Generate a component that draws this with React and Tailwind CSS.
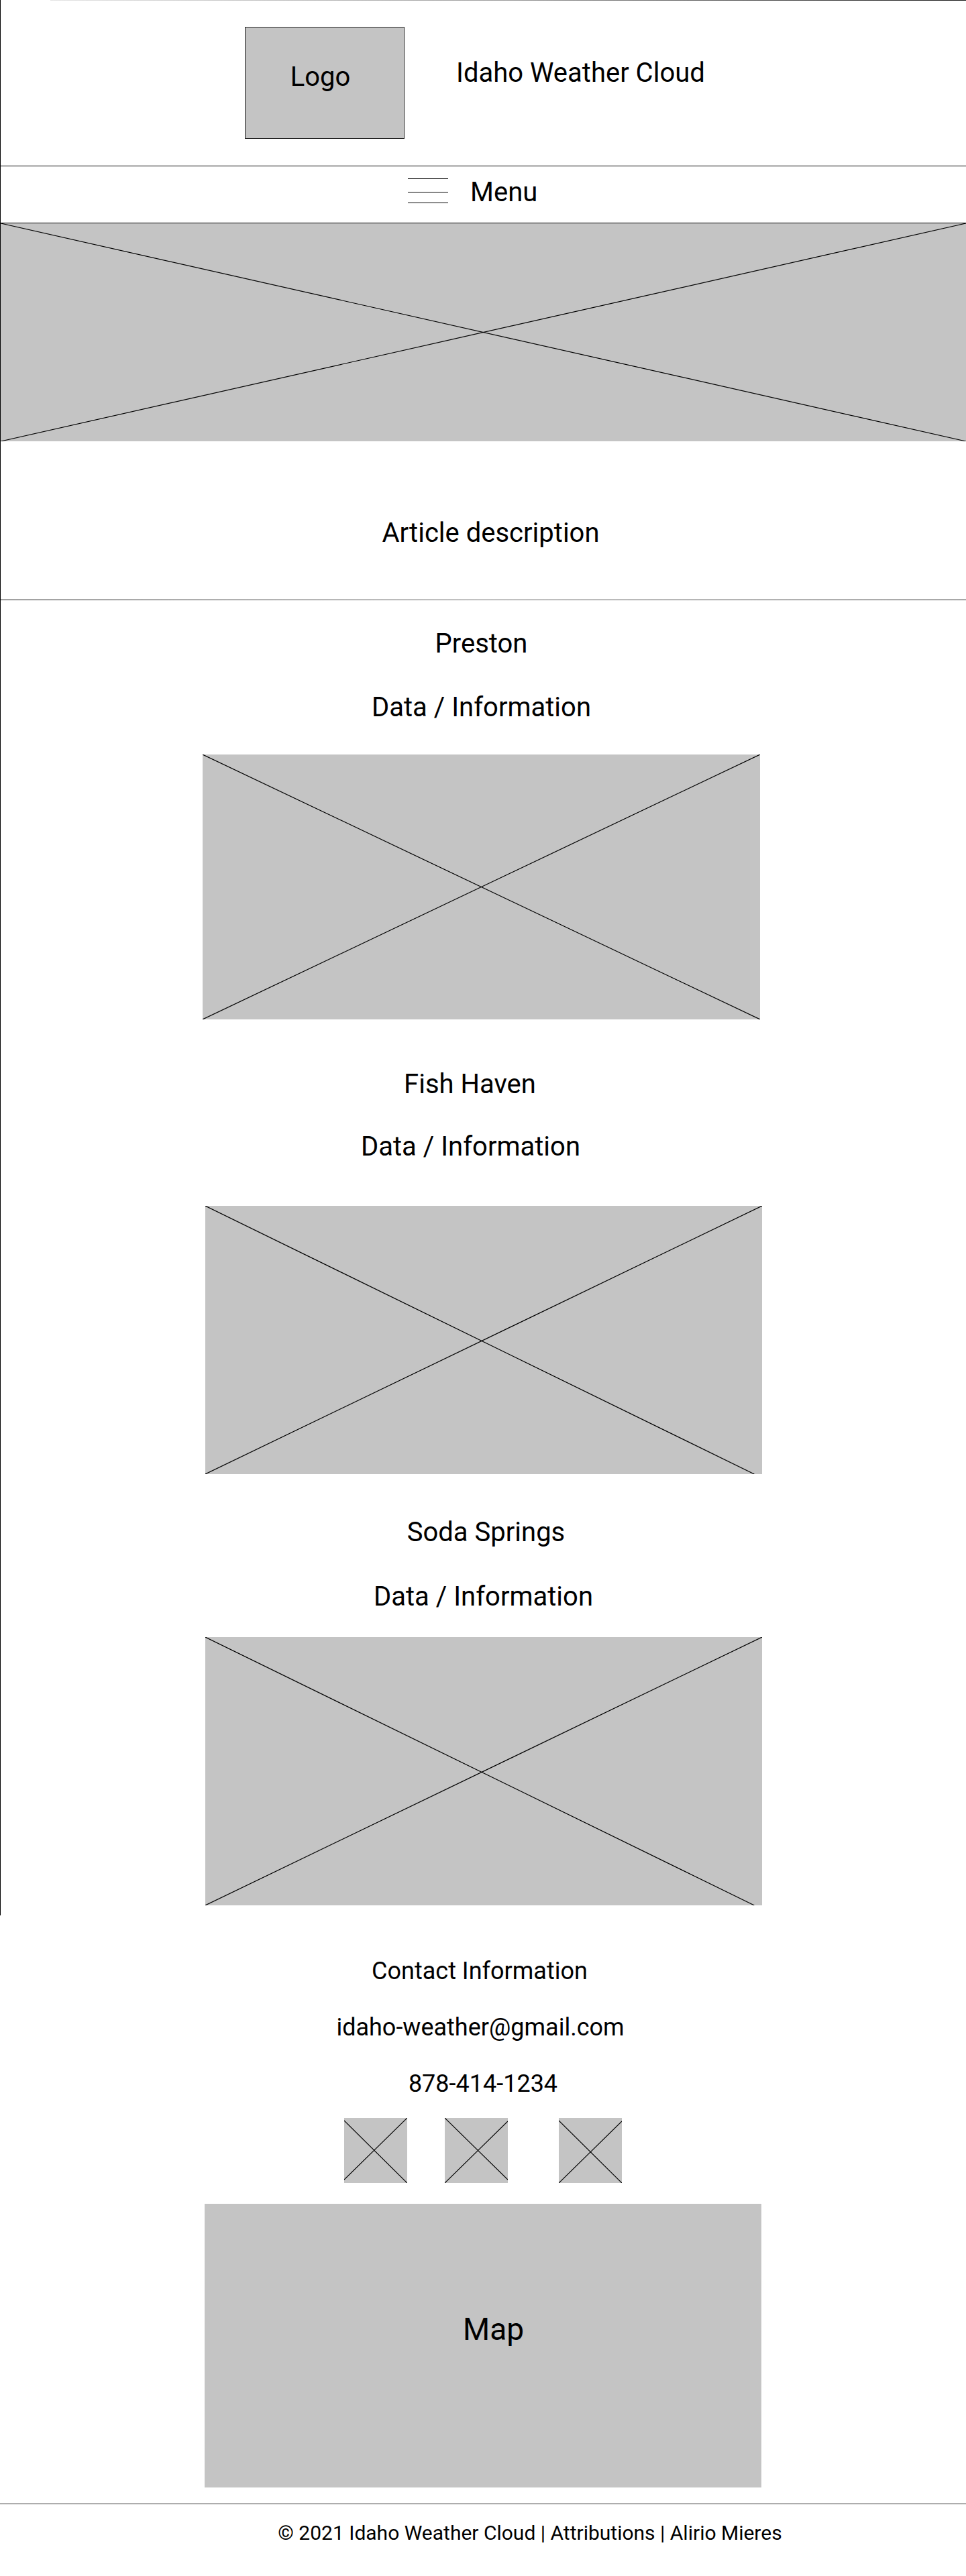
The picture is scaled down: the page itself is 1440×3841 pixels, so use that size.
const Placeholder = ({ className, lines }) => (
  <div className={"bg-[#c4c4c4] " + className}>
    <svg className="block w-full h-full" viewBox="0 0 100 100" preserveAspectRatio="none">
      {lines.map((l, i) => (
        <line
          key={i}
          x1={l[0]}
          y1={l[1]}
          x2={l[2]}
          y2={l[3]}
          stroke="#000"
          strokeWidth="1.2"
          vectorEffect="non-scaling-stroke"
        />
      ))}
    </svg>
  </div>
);

const cross = [
  [0, 0, 100, 100],
  [0, 100, 100, 0],
];

const cities = [
  {
    name: "Preston",
    nameCls: "mt-[45px] pr-[6px]",
    dataCls: "mt-[55px] pr-[6px]",
    imgCls: "mt-[50px] ml-[301px] w-[831px] h-[395px]",
    lines: cross,
  },
  {
    name: "Fish Haven",
    nameCls: "mt-[77px] pr-[40px]",
    dataCls: "mt-[53px] pr-[38px]",
    imgCls: "mt-[68px] ml-[305px] w-[830px] h-[400px]",
    lines: [
      [0, 0, 98.6, 100],
      [0, 100, 100, 0],
    ],
  },
  {
    name: "Soda Springs",
    nameCls: "mt-[67px] pl-[8px]",
    dataCls: "mt-[56px]",
    imgCls: "mt-[40px] ml-[305px] w-[830px] h-[400px]",
    lines: [
      [0, 0, 98.6, 100],
      [0, 100, 100, 0],
    ],
  },
];

const icons = [
  { cls: "", lines: [[0, 4, 100, 100], [0, 95, 100, 0]] },
  { cls: "ml-[56px]", lines: [[0, 0, 100, 95], [0, 100, 100, 5]] },
  { cls: "ml-[76px]", lines: [[0, 4, 100, 100], [0, 100, 100, 5]] },
];

const App = () => {
  return (
    <div className="w-full bg-white text-black font-[Roboto,sans-serif]">
      <div className="border-l border-black pb-[15px]">
        <div className="h-px ml-[74px] bg-gradient-to-r from-[#e4e4e4] via-[#9a9a9a] to-[#1a1a1a]" />

        <header className="h-[246px] flex items-start pt-[39px] pl-[364px]">
          <div className="w-[238px] h-[167px] border border-[#222] bg-[#c4c4c4] flex flex-col items-center pt-[54px] pr-[13px]">
            <span className="text-[40px] leading-none">Logo</span>
          </div>
          <h1 className="ml-[77px] mt-[49px] text-[40px] leading-none font-normal">
            Idaho Weather Cloud
          </h1>
        </header>

        <nav className="h-[86px] border-y border-black flex items-start pl-[607px]">
          <svg className="mt-[18px] w-[60px] h-[37px]" viewBox="0 0 60 37">
            <line x1="0" y1="0.5" x2="60" y2="0.5" stroke="#000" strokeWidth="1" />
            <line x1="0" y1="20.5" x2="60" y2="20.5" stroke="#000" strokeWidth="1" />
            <line x1="0" y1="36.5" x2="60" y2="36.5" stroke="#000" strokeWidth="1" />
          </svg>
          <span className="ml-[33px] mt-[19px] text-[40px] leading-none">Menu</span>
        </nav>

        <Placeholder className="w-full h-[325px]" lines={cross} />

        <section className="h-[236px] pt-[117px] pl-[22px] text-center">
          <p className="text-[40px] leading-none">Article description</p>
        </section>

        <div className="h-px bg-gradient-to-r from-[#111] via-[#666] to-[#222]" />

        {cities.map((c) => (
          <article key={c.name} className="flex flex-col">
            <h2 className={"text-[40px] leading-none font-normal text-center " + c.nameCls}>
              {c.name}
            </h2>
            <p className={"text-[40px] leading-none text-center " + c.dataCls}>
              Data / Information
            </p>
            <Placeholder className={c.imgCls} lines={c.lines} />
          </article>
        ))}
      </div>

      <section className="flex flex-col items-center text-[36px] leading-none">
        <h3 className="mt-[65px] pr-[10px] font-normal">Contact Information</h3>
        <p className="mt-[48px] pr-[8px]">idaho-weather@gmail.com</p>
        <p className="mt-[48px]">878-414-1234</p>

        <div className="mt-[33px] flex">
          {icons.map((ic, i) => (
            <Placeholder key={i} className={"w-[94px] h-[97px] " + ic.cls} lines={ic.lines} />
          ))}
        </div>

        <div className="mt-[31px] w-[830px] h-[423px] bg-[#c4c4c4] flex flex-col items-center pt-[164px] pl-[31px]">
          <span className="text-[46px] leading-none">Map</span>
        </div>
      </section>

      <footer className="mt-[24px] border-t border-[#333] pb-[49px]">
        <p className="mt-[28px] pl-[140px] text-center text-[30px] leading-none">
          © 2021 Idaho Weather Cloud | Attributions | Alirio Mieres
        </p>
      </footer>
    </div>
  );
};

export default App;
